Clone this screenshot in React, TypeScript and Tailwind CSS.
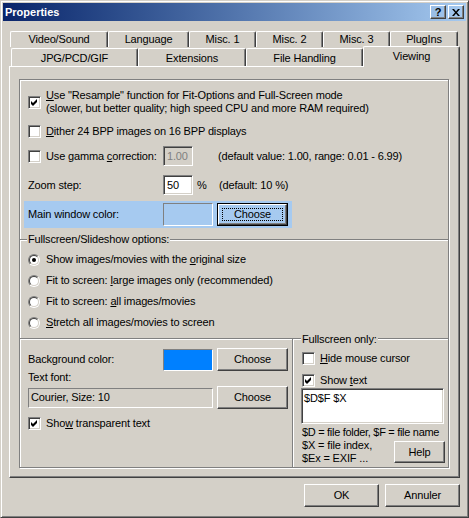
import React from "react"

const raised =
  "border border-t-white border-l-white border-r-[#404040] border-b-[#404040] shadow-[inset_-1px_-1px_0_#808080]"
const sunken =
  "border border-t-[#808080] border-l-[#808080] border-r-white border-b-white shadow-[inset_1px_1px_0_#404040,inset_-1px_-1px_0_#d4d0c8]"
const thinSunken = "border border-t-[#808080] border-l-[#808080] border-r-white border-b-white"
const etched = "h-[2px] border-t border-t-[#808080] border-b border-b-white"

function Check({ checked }: { checked?: boolean }) {
  return (
    <span className={`w-[13px] h-[13px] shrink-0 bg-white flex items-center justify-center ${sunken}`}>
      {checked && (
        <svg width="7" height="7" viewBox="0 0 7 7">
          <path d="M0 2L2 4L6 0V3L2 7L0 5Z" fill="black" />
        </svg>
      )}
    </span>
  )
}

function Radio({ on }: { on?: boolean }) {
  return (
    <span className="w-[12px] h-[12px] shrink-0 rounded-full border border-t-[#808080] border-l-[#808080] border-r-white border-b-white flex">
      <span className="flex-1 rounded-full border border-t-[#404040] border-l-[#404040] border-r-[#d4d0c8] border-b-[#d4d0c8] bg-white flex items-center justify-center">
        {on && <span className="w-[4px] h-[4px] rounded-full bg-black" />}
      </span>
    </span>
  )
}

function Btn({ children, className = "", def }: { children: React.ReactNode; className?: string; def?: boolean }) {
  if (def) {
    return (
      <div className={`border border-black flex ${className}`}>
        <div className={`flex-1 flex p-[3px] ${raised}`}>
          <div className="flex-1 border border-dotted border-black flex items-center justify-center">{children}</div>
        </div>
      </div>
    )
  }
  return <div className={`flex items-center justify-center ${raised} ${className}`}>{children}</div>
}

function Tab({ label, className = "" }: { label: string; className?: string }) {
  return (
    <div
      className={`flex items-center justify-center rounded-t-[2px] border-t border-l border-r border-t-white border-l-white border-r-[#404040] shadow-[inset_-1px_0_0_#808080] ${className}`}
    >
      {label}
    </div>
  )
}

export default function App() {
  return (
    <div className="w-[469px] h-[518px] bg-[#d4d0c8] text-black text-[11px] leading-[13px] tracking-[-0.15px] font-['Liberation_Sans',Arial,sans-serif] border border-t-[#d4d0c8] border-l-[#d4d0c8] border-r-[#404040] border-b-[#404040] shadow-[inset_1px_1px_0_white,inset_-1px_-1px_0_#808080] p-[2px] flex flex-col">
      {/* title bar */}
      <div className="h-[18px] flex items-center bg-linear-to-r from-[#0a246a] to-[#a6caf0] pl-[2px] pr-[2px]">
        <span className="text-white font-bold flex-1 tracking-normal">Properties</span>
        <Btn className="w-[16px] h-[14px] font-bold text-[11px]">?</Btn>
        <Btn className="w-[16px] h-[14px] ml-[2px]">
          <svg width="8" height="7" viewBox="0 0 8 7">
            <path d="M0 0h2l2 2.5L6 0h2L5 3.5L8 7H6L4 4.5L2 7H0l3-3.5z" fill="black" />
          </svg>
        </Btn>
      </div>

      {/* tabs */}
      <div className="mt-[10px] ml-[7px] flex h-[17px] pb-[1px]">
        <Tab label="Video/Sound" className="w-[98px]" />
        <Tab label="Language" className="w-[81px]" />
        <Tab label="Misc. 1" className="w-[67px]" />
        <Tab label="Misc. 2" className="w-[67px]" />
        <Tab label="Misc. 3" className="w-[67px]" />
        <Tab label="PlugIns" className="w-[68px]" />
      </div>
      <div className="ml-[8px] flex h-[18px] items-start">
        <Tab label="JPG/PCD/GIF" className="w-[127px] h-[18px] pt-[2px]" />
        <Tab label="Extensions" className="w-[108px] h-[18px] pt-[2px]" />
        <Tab label="File Handling" className="w-[117px] h-[18px] pt-[2px]" />
        <div className="relative z-10 -mt-[2px] w-[97px] h-[21px] bg-[#d4d0c8] flex items-center justify-center rounded-t-[2px] border-t border-l border-r border-t-white border-l-white border-r-[#404040] shadow-[inset_-1px_0_0_#808080] pb-[2px]">
          Viewing
        </div>
      </div>

      {/* panel */}
      <div className={`ml-[6px] w-[451px] h-[412px] flex flex-col pt-[12px] pl-[9px] pr-[10px] pb-[9px] ${raised}`}>
        <div className="flex-1 flex flex-col border border-[#808080] shadow-[inset_1px_1px_0_white,1px_1px_0_white]">
          <div className="mt-[9px] pl-[8px] flex items-center h-[26px]">
            <Check checked />
            <div className="ml-[5px] whitespace-nowrap">
              <div>
                <u>U</u>se "Resample" function for Fit-Options and Full-Screen mode
              </div>
              <div>(slower, but better quality; high speed CPU and more RAM required)</div>
            </div>
          </div>

          <div className="mt-[6px] pl-[8px] flex items-center h-[20px]">
            <Check />
            <span className="ml-[5px]">
              <u>D</u>ither 24 BPP images on 16 BPP displays
            </span>
          </div>

          <div className="mt-[5px] pl-[8px] flex items-center h-[20px]">
            <Check />
            <span className="ml-[5px] w-[117px]">
              Use gamma <u>c</u>orrection:
            </span>
            <div className={`w-[30px] h-[20px] flex items-center pl-[3px] text-[#808080] ${sunken}`}>1.00</div>
            <span className="ml-[25px]">(default value: 1.00, range: 0.01 - 6.99)</span>
          </div>

          <div className="mt-[9px] pl-[8px] flex items-center h-[20px]">
            <span className="w-[135px]">Zoom step:</span>
            <div className={`w-[30px] h-[20px] flex items-center pl-[3px] bg-white ${sunken}`}>50</div>
            <span className="ml-[4px] w-[22px]">%</span>
            <span>(default: 10 %)</span>
          </div>

          <div className="mt-[6px] ml-[4px] w-[268px] h-[27px] bg-[#a6caf0] flex items-center pl-[4px]">
            <span className="w-[135px]">Main window color:</span>
            <div className={`w-[50px] h-[23px] bg-[#a6caf0] ${thinSunken}`} />
            <Btn def className="ml-[4px] w-[71px] h-[23px]">
              Choose
            </Btn>
          </div>

          <div className="mt-[5px] h-[13px] flex items-center">
            <div className={`w-[7px] ${etched}`} />
            <span className="px-[1px]">Fullscreen/Slideshow options:</span>
            <div className={`flex-1 ${etched}`} />
          </div>

          <div className="mt-[3px] flex flex-col">
            <div className="h-[21px] pl-[8px] flex items-center">
              <Radio on />
              <span className="ml-[6px]">
                Show images/movies with the <u>o</u>riginal size
              </span>
            </div>
            <div className="h-[21px] pl-[8px] flex items-center">
              <Radio />
              <span className="ml-[6px]">
                Fit to screen: <u>l</u>arge images only (recommended)
              </span>
            </div>
            <div className="h-[21px] pl-[8px] flex items-center">
              <Radio />
              <span className="ml-[6px]">
                Fit to screen: <u>a</u>ll images/movies
              </span>
            </div>
            <div className="h-[21px] pl-[8px] flex items-center">
              <Radio />
              <span className="ml-[6px]">
                <u>S</u>tretch all images/movies to screen
              </span>
            </div>
          </div>

          {/* bottom section */}
          <div className="flex-1 flex">
            <div className="w-[272px] flex flex-col">
              <div className={`mt-[5px] ${etched}`} />
              <div className="mt-[8px] h-[23px] pl-[8px] flex items-center">
                <span className="w-[135px]">Background color:</span>
                <div className={`w-[50px] h-[22px] bg-[#0080ff] ${thinSunken}`} />
                <Btn className="ml-[4px] w-[71px] h-[23px]">Choose</Btn>
              </div>
              <div className="h-[13px] pl-[8px] flex items-center">Text font:</div>
              <div className="mt-[2px] h-[23px] pl-[8px] flex items-center">
                <div className={`w-[185px] h-[20px] flex items-center pl-[2px] ${thinSunken}`}>Courier, Size: 10</div>
                <Btn className="ml-[4px] w-[71px] h-[23px]">Choose</Btn>
              </div>
              <div className="mt-[8px] h-[13px] pl-[8px] flex items-center">
                <Check checked />
                <span className="ml-[5px]">
                  Sho<u>w</u> transparent text
                </span>
              </div>
            </div>

            <div className="flex-1 flex flex-col">
              <div className="h-[12px] flex">
                <div className="self-end w-[9px] h-[7px] border-t border-l border-[#808080] shadow-[inset_1px_1px_0_white]" />
                <span className="px-[1px] self-center">Fullscreen only:</span>
                <div className={`flex-1 self-center ${etched}`} />
              </div>
              <div className="flex-1 flex flex-col border-l border-[#808080] shadow-[inset_1px_0_0_white] pl-[9px]">
                <div className="mt-[7px] h-[13px] flex items-center">
                  <Check />
                  <span className="ml-[5px]">
                    <u>H</u>ide mouse cursor
                  </span>
                </div>
                <div className="mt-[9px] h-[13px] flex items-center">
                  <Check checked />
                  <span className="ml-[5px]">
                    Show <u>t</u>ext
                  </span>
                </div>
                <div className={`mt-[1px] -ml-[1px] w-[143px] h-[36px] bg-white pl-[2px] pt-[3px] ${sunken}`}>$D$F $X</div>
                <div className="mt-[2px] whitespace-nowrap tracking-[-0.3px]">$D = file folder, $F = file name</div>
                <div className="flex justify-between pr-[3px]">
                  <div className="flex flex-col whitespace-nowrap">
                    <span>$X = file index,</span>
                    <span>$Ex = EXIF ...</span>
                  </div>
                  <Btn className="mt-[2px] w-[51px] h-[22px]">Help</Btn>
                </div>
              </div>
            </div>
          </div>
        </div>
      </div>

      {/* buttons */}
      <div className="mt-[6px] h-[23px] flex justify-end pr-[6px]">
        <Btn className="w-[75px] h-[23px]">OK</Btn>
        <Btn className="ml-[6px] w-[75px] h-[23px]">Annuler</Btn>
      </div>
    </div>
  )
}
